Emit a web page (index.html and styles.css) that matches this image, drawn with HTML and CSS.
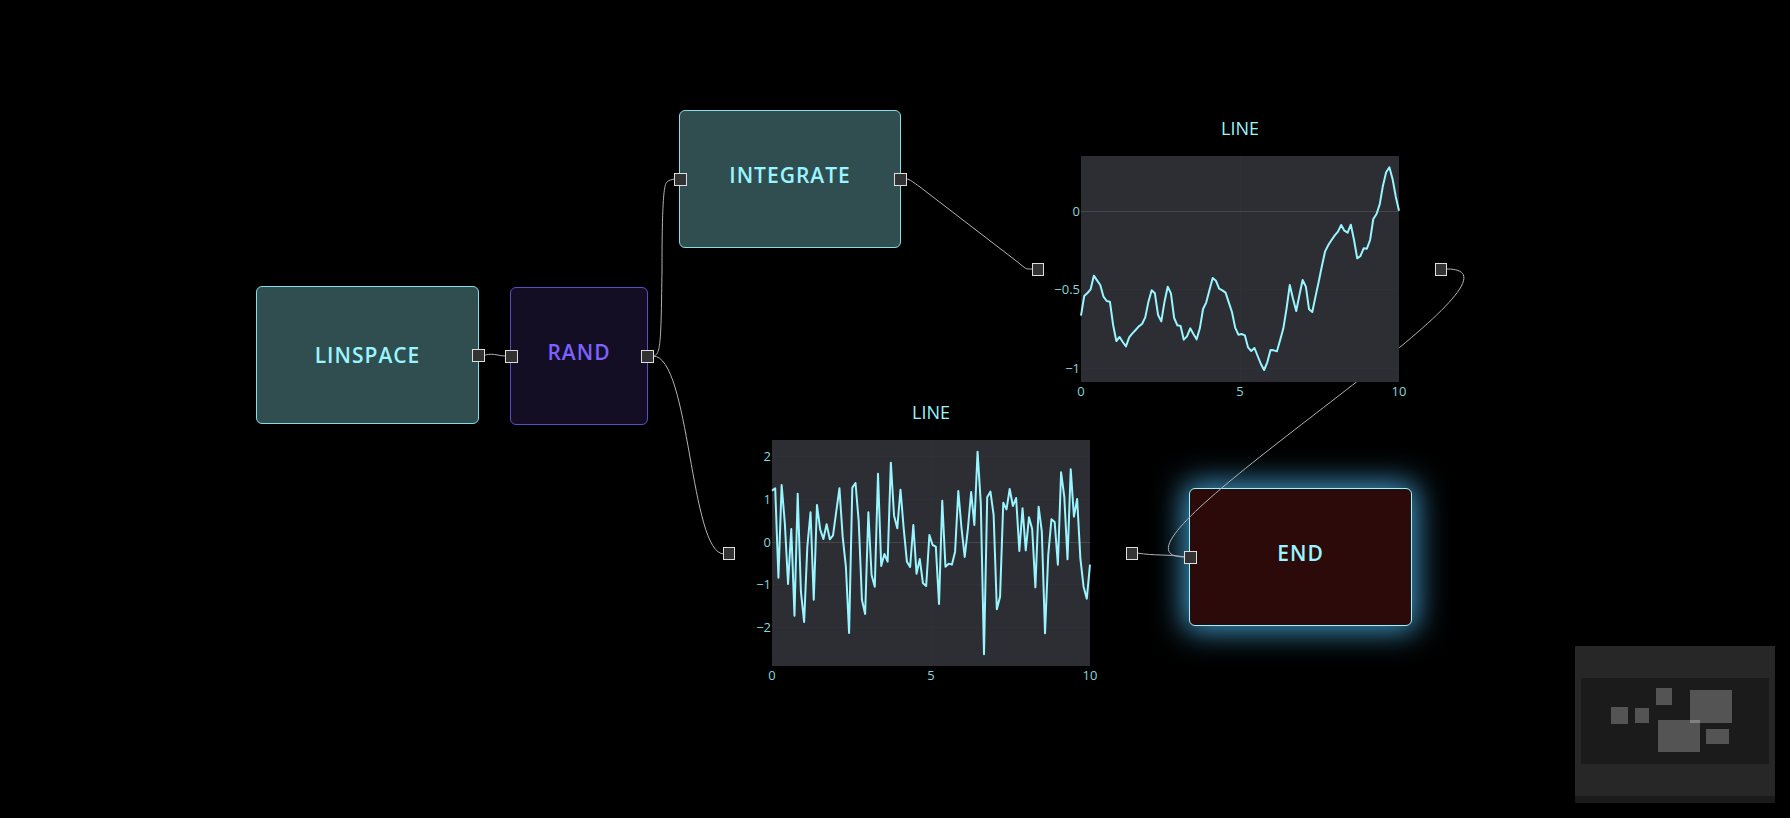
FILE: index.html
```html
<!DOCTYPE html>
<html lang="en">
<head>
<meta charset="utf-8">
<title>Flow</title>
<link rel="stylesheet" href="styles.css">
</head>
<body>
<main class="canvas">
  <section class="node teal linspace"><h2 class="label">LINSPACE</h2><i class="port out"></i></section>
  <section class="node violet rand"><h2 class="label">RAND</h2><i class="port in"></i><i class="port out"></i></section>
  <section class="node teal integrate"><h2 class="label">INTEGRATE</h2><i class="port in"></i><i class="port out"></i></section>
  <section class="node red end"><h2 class="label">END</h2><i class="port in"></i></section>

  <svg class="edges" aria-hidden="true">
    <path d="M483 356C491 352 498 356 506 356"/>
    <path d="M653 356C661 356 661 340 662 270C662 200 664 184 667 182C669 180 671 180 674 179"/>
    <path d="M653 356C690 356 690 554 724 554"/>
    <path d="M906 179C910 179 914 183 920 187L1015 260C1028 270 1024 269 1033 269"/>
    <path d="M1447 269C1559 269 1074 557 1185 557"/>
    <path d="M1137 553C1155 556 1167 554 1186 557"/>
  </svg>

  <figure class="chart integral" data-series="integral">
    <figcaption class="title">LINE</figcaption>
    <svg class="plot" viewBox="0 0 318 226" role="img" aria-label="Integral of random values"></svg>
    <i class="port in"></i><i class="port out"></i>
  </figure>
  <figure class="chart noise" data-series="noise">
    <figcaption class="title">LINE</figcaption>
    <svg class="plot" viewBox="0 0 318 226" role="img" aria-label="Random values"></svg>
    <i class="port in"></i><i class="port out"></i>
  </figure>

  <svg class="minimap" viewBox="0 0 200 157" role="img" aria-label="Minimap">
    <rect class="map-bg" width="200" height="157"/>
    <path class="map-mask" d="M6 32h188v86H6zM0 150h200v7H0z"/>
    <g class="map-nodes">
      <rect x="36" y="61" width="17" height="17"/>
      <rect x="60" y="62" width="14" height="15"/>
      <rect x="81" y="42" width="16" height="17"/>
      <rect x="115" y="44" width="42" height="33"/>
      <rect x="83" y="74" width="42" height="32"/>
      <rect x="131" y="83" width="23" height="15"/>
    </g>
  </svg>
</main>
<script src="charts.js"></script>
</body>
</html>
```
FILE: styles.css
```css
body {
  margin: 0;
  background: #000;
  font-family: "Open Sans", "Noto Sans", sans-serif;
}

.canvas {
  position: relative;
  height: 100vh;
  overflow: hidden;
}

.edges {
  position: absolute;
  inset: 0;
  width: 100%;
  height: 100%;
  fill: none;
  stroke: #b1b1b7;
  stroke-width: 1;
  pointer-events: none;
}

.node {
  position: absolute;
  box-sizing: border-box;
  width: 223px;
  height: 138px;
  display: flex;
  align-items: center;
  justify-content: center;
  border: 1px solid #86dfe8;
  border-radius: 6px;
  color: #99f5ff;
}

.label {
  margin: 0;
  padding-bottom: 8px;
  font-size: 21px;
  line-height: 28px;
  font-weight: 600;
  letter-spacing: 1px;
}

.teal { background: #304d50; }
.violet {
  width: 138px;
  background: #130e24;
  border-color: #5f4bc8;
  color: #7b61ff;
}
.red {
  background: #2c0a0a;
  border-color: #99f5ff;
  box-shadow: 0 0 30px 5px rgba(68, 162, 212, 0.95);
}

.linspace { left: 256px; top: 286px; }
.linspace .label { padding-bottom: 0; }
.rand { left: 510px; top: 287px; }
.integrate { left: 679px; top: 110px; width: 222px; }
.end { left: 1189px; top: 488px; }

.port {
  position: absolute;
  z-index: 2;
  top: 50%;
  box-sizing: border-box;
  width: 13px;
  height: 13px;
  margin-top: -6px;
  background: #333;
  border: 1px solid #ddd;
}
.in { left: -6px; }
.out { right: -7px; }

.chart {
  position: absolute;
  box-sizing: border-box;
  width: 403px;
  height: 318px;
  margin: 0;
  padding: 4px 42px 0 43px;
  color: #99f5ff;
}
.chart .port {
  width: 12px;
  margin-top: -7px;
}
.chart .out { right: -6px; }
.integral { left: 1038px; top: 111px; }
.noise { left: 729px; top: 395px; }

.title {
  height: 41px;
  font-size: 18px;
  line-height: 26px;
  text-align: center;
}

.plot {
  display: block;
  width: 100%;
  overflow: visible;
  font-size: 13px;
}
.plot-bg { fill: #2d2e33; }
.grid { stroke: #303136; }
.zero { stroke: #46474a; }
.trace {
  fill: none;
  stroke: #99f5ff;
  stroke-width: 2;
  stroke-linejoin: round;
}
.tick { fill: #86d6df; }
.tick-x { text-anchor: middle; }
.tick-y { text-anchor: end; }

.minimap {
  position: absolute;
  right: 15px;
  bottom: 15px;
  width: 200px;
}
.map-bg { fill: #272727; }
.map-mask { fill: #1b1b1b; }
.map-nodes { fill: #fff; fill-opacity: 0.25; }
```
FILE: charts.js
```js
// Each value is a depth below the top of the plot, in thirds of a unit.
const series = {
  integral: {
    ticks: [["0", 55], ["−0.5", 133], ["−1", 212]],
    values: [479,420,411,400,359,373,387,422,435,437,507,555,543,558,571,544,532,522,511,504,484,437,403,412,477,496,437,392,412,486,508,510,551,541,517,534,550,517,459,439,402,366,374,398,403,410,439,468,515,536,534,538,574,585,576,600,624,642,619,582,583,586,552,517,457,387,428,465,417,372,392,460,468,422,377,330,286,267,252,238,227,207,224,230,206,252,307,300,277,278,252,189,174,145,89,49,34,69,122,164]
  },
  noise: {
    ticks: [["2", 16], ["1", 59], ["0", 102], ["−1", 144], ["−2", 187]],
    values: [152,145,413,135,250,432,267,527,161,455,546,320,217,479,195,268,297,253,298,286,215,145,290,380,579,143,129,245,480,522,217,405,440,101,378,342,365,68,227,265,149,265,365,381,255,401,357,430,438,285,315,320,492,182,380,371,374,335,153,265,351,265,156,255,35,190,643,172,155,225,508,470,188,208,147,198,174,333,205,331,232,267,442,200,275,580,345,238,246,374,97,171,358,88,230,177,355,440,476,374]
  }
};

const W = 318;
const H = 226;

function add(parent, name, attrs, text) {
  const el = document.createElementNS("http://www.w3.org/2000/svg", name);
  for (const key in attrs) el.setAttribute(key, attrs[key]);
  if (text) el.textContent = text;
  parent.append(el);
}

for (const chart of document.querySelectorAll(".chart")) {
  const plot = chart.querySelector(".plot");
  const { ticks, values } = series[chart.dataset.series];
  add(plot, "rect", { class: "plot-bg", width: W, height: H });
  add(plot, "path", { class: "grid", d: `M159.5 0V${H}` });
  for (const [label, y] of ticks) {
    add(plot, "path", { class: label === "0" ? "zero" : "grid", d: `M0 ${y + 0.5}H${W}` });
    add(plot, "text", { class: "tick tick-y", x: -1, y: y + 5 }, label);
  }
  ["0", "5", "10"].forEach((label, i) => {
    add(plot, "text", { class: "tick tick-x", x: (i * W) / 2, y: H + 14 }, label);
  });
  const points = values.map((v, i) => `${(i * W) / (values.length - 1)},${v / 3}`);
  add(plot, "polyline", { class: "trace", points: points.join(" ") });
}
```
